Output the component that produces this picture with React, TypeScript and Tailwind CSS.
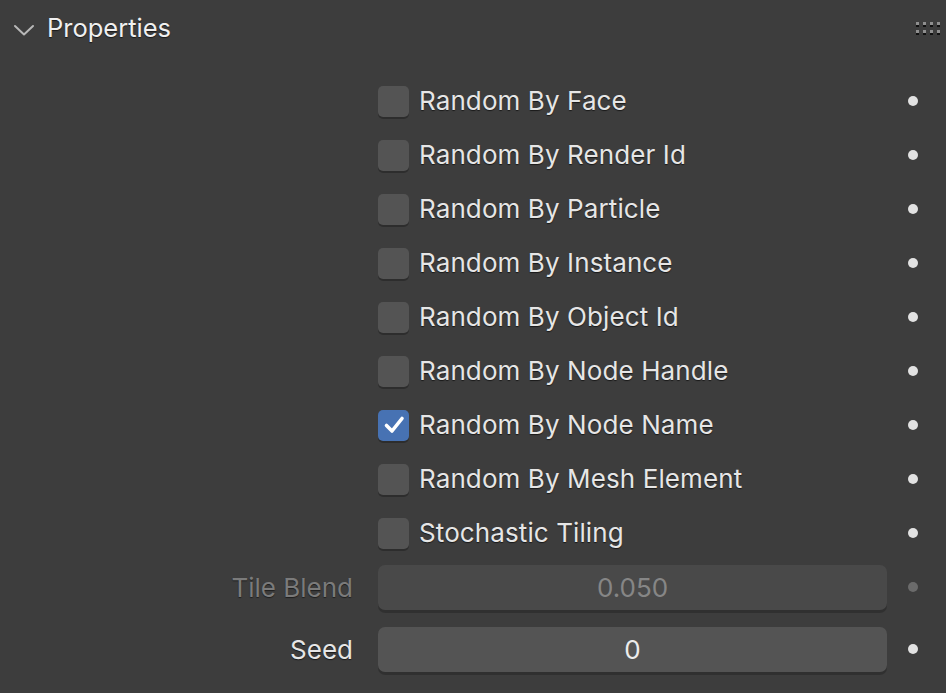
import React from 'react';

const rows: { label: string; checked?: boolean }[] = [
  { label: 'Random By Face' },
  { label: 'Random By Render Id' },
  { label: 'Random By Particle' },
  { label: 'Random By Instance' },
  { label: 'Random By Object Id' },
  { label: 'Random By Node Handle' },
  { label: 'Random By Node Name', checked: true },
  { label: 'Random By Mesh Element' },
  { label: 'Stochastic Tiling' },
];

const Dot = ({ dim }: { dim?: boolean }) => (
  <div className="w-[59px] flex justify-start pl-[21px]">
    <div className={`w-[10px] h-[10px] rounded-full ${dim ? 'bg-[#6b6b6b]' : 'bg-[#e2e2e2]'}`} />
  </div>
);

const CheckRow = ({ label, checked }: { label: string; checked?: boolean }) => (
  <div className="h-[54px] flex items-center">
    <div className="w-[378px]" />
    <div className="flex-1 flex items-center gap-[10px]">
      <div
        className={`w-[31px] h-[31px] rounded-[5px] flex items-center justify-center shadow-[0_2px_0_rgba(0,0,0,0.25)] ${
          checked ? 'bg-[#4772b3]' : 'bg-[#545454]'
        }`}
      >
        {checked && (
          <svg width="24" height="24" viewBox="0 0 24 24">
            <path d="M4.5 12.5 L10 18 L20 5.5" fill="none" stroke="#fff" strokeWidth="3.6" strokeLinecap="round" strokeLinejoin="round" />
          </svg>
        )}
      </div>
      <span className="text-[26px] tracking-[0.1px] text-[#e6e6e6] [text-shadow:0_1px_1px_rgba(0,0,0,0.6)] -mt-[1px]">{label}</span>
    </div>
    <Dot />
  </div>
);

export default function App() {
  return (
    <div
      className="w-[946px] h-[693px] bg-[#3d3d3d] overflow-hidden select-none"
      style={{ fontFamily: 'Inter, "Noto Sans", sans-serif' }}
    >
      {/* Panel header */}
      <div className="h-[56px] flex items-center pl-[13px] pr-[6px]">
        <svg width="22" height="14" viewBox="0 0 22 14" className="mr-[12px] mt-[3px]">
          <path d="M2 3 L11 11.5 L20 3" fill="none" stroke="#b8b8b8" strokeWidth="2" strokeLinecap="round" strokeLinejoin="round" />
        </svg>
        <span className="text-[25.5px] text-[#f0f0f0] [text-shadow:0_1px_1px_rgba(0,0,0,0.6)]">Properties</span>
        <div className="ml-auto grid grid-cols-4 gap-x-[4px] gap-y-[5px] -mt-[2px]">
          {Array.from({ length: 8 }).map((_, i) => (
            <div key={i} className="w-[3px] h-[3px] bg-[#8f8f8f] shadow-[0_2px_0_#111]" />
          ))}
        </div>
      </div>

      <div className="h-[18px]" />

      {rows.map((r) => (
        <CheckRow key={r.label} label={r.label} checked={r.checked} />
      ))}

      {/* Tile Blend */}
      <div className="h-[58px] flex items-center -mt-[2px]">
        <div className="w-[353px] text-right text-[26px] text-[#7b7b7b] [text-shadow:0_1px_1px_rgba(0,0,0,0.5)]">Tile Blend</div>
        <div className="w-[25px]" />
        <div className="w-[509px] h-[45px] rounded-[7px] bg-[#494949] shadow-[0_3px_0_rgba(0,0,0,0.2)] flex items-center justify-center text-[26px] text-[#868686]">
          0.050
        </div>
        <Dot dim />
      </div>

      {/* Seed */}
      <div className="h-[64px] flex items-center mt-[1px]">
        <div className="w-[353px] text-right text-[26px] text-[#e6e6e6] [text-shadow:0_1px_1px_rgba(0,0,0,0.6)]">Seed</div>
        <div className="w-[25px]" />
        <div className="w-[509px] h-[45px] rounded-[7px] bg-[#545454] shadow-[0_3px_0_rgba(0,0,0,0.2)] flex items-center justify-center text-[26px] text-[#ececec]">
          0
        </div>
        <Dot />
      </div>
    </div>
  );
}
